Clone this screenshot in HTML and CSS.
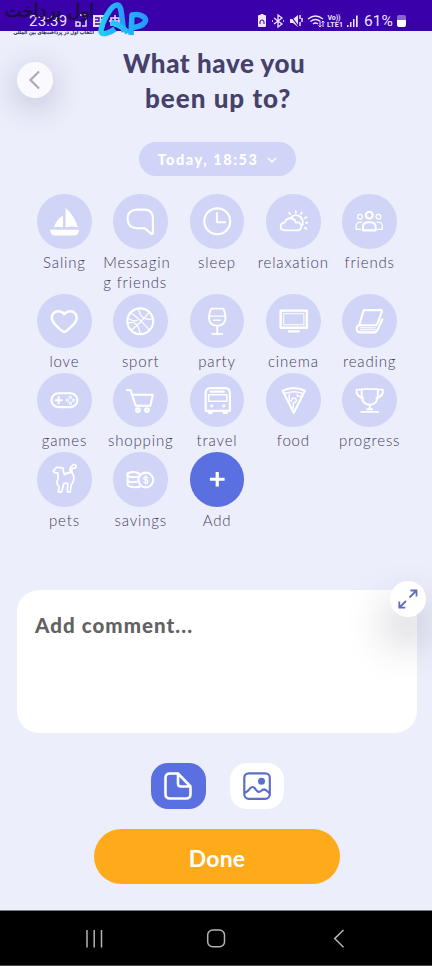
FILE: index.html
```html
<!DOCTYPE html>
<html lang="en">
<head>
<meta charset="utf-8">
<title>What have you been up to?</title>
<link rel="stylesheet" href="styles.css">
</head>
<body>
<header class="status">
  <div class="clock">23:39</div>
  <svg class="notifications" width="48" height="14" viewBox="0 0 48 14"><g fill="none" stroke="#e9dcff" stroke-width="1.5"><path d="M5 1h6v11H7M1 8h4v4H1z"/><path d="M36 4h8v7h-8zM34 7h12M40 1v12"/></g><path fill="#e9dcff" d="M18 1h12v12H18z"/><path d="M20 4h4v3h-4m6-3h2v2m-8 4h7" fill="none" stroke="#3a00aa" stroke-width="1.3"/></svg>
  <svg class="system" width="104" height="16" viewBox="0 0 104 16">
    <g fill="none" stroke="#eee4ff" stroke-width="1.3">
      <path d="M18 5l8 6-4 3V2l4 3-8 6M16 8h1M27 8h1"/>
      <path d="M44 2v4M46 5v4M44 9v4" stroke-width="1.5"/>
      <path d="M52 6q7.500-6 15 0M54.500 8.500q5-4 10 0M57 11q2.500-2 5 0"/>
      <path d="M64 9v5M62.500 12.500l1.500 1.500 1.500-1.500M67 14V8M65.500 9.500l1.500-1.500 1.500 1.500" stroke-width="1"/>
    </g>
    <g fill="#eee4ff"><path d="M3 2h1.500V1h3v1H9q1 0 1 1v10q0 1-1 1H3q-1 0-1-1V3q0-1 1-1z"/><path d="M34 6h3l5-4v12l-5-4h-3z"/><path d="M91 12h1.500v2H91zM94 9h1.500v5H94zM97 6h1.500v8H97zM100 2.500h1.700V14H100z"/></g>
    <path d="M4 9a2 2 0 1 1 4 0M4 9v2M8 9v2" fill="none" stroke="#3a00aa"/>
    <path d="M34 2l9 12" stroke="#3a00aa" stroke-width="1.200"/>
    <text x="71.500" y="6.800" class="tiny" textLength="13">Vo))</text><text x="71" y="14.300" class="tiny" textLength="16">LTE1</text>
  </svg>
  <span class="percent">61%</span>
  <i class="battery"></i>
  <div class="watermark">
    <div class="brand">اول پرداخت</div>
    <div class="slogan">انتخاب اول در پرداخت‌های بین المللی</div>
    <svg class="logo" width="54" height="38" viewBox="0 0 54 38"><defs><linearGradient id="b" x2="1"><stop stop-color="#23cef5"/><stop offset="1" stop-color="#2699ff"/></linearGradient></defs><g fill="none" stroke="url(#b)" stroke-width="5.500" stroke-linejoin="round"><path d="M18 29C13 33 4 36 4 31 5 22 14 5 20 5c5 0 4 9 7 27"/><path d="M14 22c5 2 13 5 17 11M34 35l1-20c8-2 16 3 13 7-3 5-9 5-14 6"/></g></svg>
  </div>
</header>

<main>
  <div class="heading">
    <button class="back" aria-label="Back"><svg width="36" height="36" viewBox="0 0 36 36"><path d="M22 9.500l-8.500 8.500 8.500 8.500" fill="none" stroke="#aaa9c2" stroke-width="2.200"/></svg></button>
    <h1><span class="h-a">What have you</span><span class="h-b">been up to?</span></h1>
  </div>
  <button class="date"><span>Today, 18:53</span><svg width="10" height="8" viewBox="0 0 10 8"><path d="M1 2l4 4 4-4" fill="none" stroke="#fff" stroke-width="1.500"/></svg></button>

  <section class="activities">
    <div class="item"><svg class="dot" viewBox="0 0 54 54"><path d="M13 35.500h28.500q0 5.500-4 5.500H17q-3.500 0-4-5.500zM28.300 13.500q9 8 12.200 19.500-7-1.500-12.200 0zM25.700 21.500V33q-4-1.200-8.700 0 2-8 8.700-11.500z" fill="#fff" stroke="none"/></svg><span class="l-saling">Saling</span></div>
    <div class="item"><svg class="dot" viewBox="0 0 54 54"><path d="M23 15.500h8q8.500 0 8.500 8.500v14.500q0 2-2 .500l-6-5H23q-8.500-1-8.500-9.500 0-8 8.500-9z"/></svg><span class="l-message">Messagin<br>g friends</span></div>
    <div class="item"><svg class="dot" viewBox="0 0 54 54"><circle cx="27" cy="27" r="12.800"/><path d="M26.700 19v9h8"/></svg><span class="l-sleep">sleep</span></div>
    <div class="item"><svg class="dot" viewBox="0 0 54 54"><g stroke-width="1.800"><path d="M18.500 36q-4 0-4-3.700 0-4 4-4 1.500-4.300 5.500-4.300 4.300 0 5.500 4.300 5-1 5.500 3.700 0 4-4 4zM25.500 22.500q3-2.500 6.500-1 5.500 2 4.300 9"/><path d="M23 18.500l1 1.500M29.500 17v1.500M35.500 18.300l-.800 1.500M40 23l-1.500.8M41 28.500h-1.300M40 34.500l-1.500-1"/></g></svg><span class="l-relaxation">relaxation</span></div>
    <div class="item"><svg class="dot" viewBox="0 0 54 54"><circle cx="27" cy="21" r="3.400"/><path d="M20.700 36v-3q0-5 5-5h2.600q5 0 5 5v3z"/><g stroke-width="1.200"><circle cx="17.800" cy="22.500" r="2.400"/><circle cx="36.200" cy="22.500" r="2.400"/><path d="M19.500 28q-5.500-.5-5.500 4v3h4.500M34.500 28q5.500-.5 5.500 4v3h-4.500"/></g></svg><span class="l-friends">friends</span></div>

    <div class="item"><svg class="dot" viewBox="0 0 54 54"><path d="M27 37.500q-2 0-9-7.200c-7-7.300-1.500-13.300 3-13.300q4 0 6 3 2-3 6-3c4.500 0 10 6 3 13.300Q29 37.500 27 37.500z" stroke-width="2.500"/></svg><span class="l-love">love</span></div>
    <div class="item"><svg class="dot" viewBox="0 0 54 54"><circle cx="27" cy="27" r="12.800"/><path d="M17.500 18.500q9 6 18.500 17M14.500 29q10-4 12.500 11M18 36q9-7 18-18M25 14.500q3 13 14.500 10M15 24q6 4 9 2" stroke-width="1.300"/></svg><span class="l-sport">sport</span></div>
    <div class="item"><svg class="dot" viewBox="0 0 54 54"><path d="M21 14.500h12q2.700 6 2 11-1.500 6-8 6t-8-6q-.700-5 2-11zM27 31.500V39M22 39.500h10" stroke-width="1.900"/><path d="M20 22h14M23 26h7" stroke-width="1.300"/></svg><span class="l-party">party</span></div>
    <div class="item"><svg class="dot" viewBox="0 0 54 54"><path d="M14.500 16.500h26v17h-26z" stroke-width="2.400"/><path d="M17.500 19.500h20v11h-20z" stroke-width="1"/><path d="M22.500 37h10"/></svg><span class="l-cinema">cinema</span></div>
    <div class="item"><svg class="dot" viewBox="0 0 54 54"><path d="M22 16h16.500q1.500 0 1 1.500L35 29.500q-.500 1.500-2 1.500H17l4-13.500q.500-1.500 1-1.500zM17 31q-3 1-2.300 4 .500 3 3.300 3h14q2 0 3-2l5-11"/><path d="M18 33.500h15M18 35.500h15" stroke-width="1"/></svg><span class="l-reading">reading</span></div>

    <div class="item"><svg class="dot" viewBox="0 0 54 54"><rect x="14.300" y="20" width="25.700" height="13.800" rx="6.900"/><path d="M18.500 27h6M21.500 24v6"/><g stroke-width="1"><circle cx="33" cy="24" r="1.200"/><circle cx="33" cy="30" r="1.200"/><circle cx="30" cy="27" r="1.200"/><circle cx="36" cy="27" r="1.200"/></g></svg><span class="l-games">games</span></div>
    <div class="item"><svg class="dot" viewBox="0 0 54 54"><path d="M14 17h3.500l5 15.500h14.500l2.500-11H19"/><circle cx="24.700" cy="36.700" r="1.800"/><circle cx="33.700" cy="36.700" r="1.800"/></svg><span class="l-shopping">shopping</span></div>
    <div class="item"><svg class="dot" viewBox="0 0 54 54"><path d="M20 15h15q4.500 0 4.500 5v17.500H15.500V20q0-5 4.500-5zM20.500 18.500h13"/><path d="M18.500 21.500h18v6.500h-18z" stroke-width="1.500"/><path d="M18.500 38v1.500h3V38M33.500 38v1.500h3V38"/><circle cx="21.500" cy="32.500" r=".6"/><circle cx="33.500" cy="32.500" r=".6"/></svg><span class="l-travel">travel</span></div>
    <div class="item"><svg class="dot" viewBox="0 0 54 54"><path d="M16.500 17.500q11-5 22 0L27.500 39.500z"/><path d="M19.500 20q8-3 16 0M23 21v6q3 2 3-2h3q3 3-2 5v5M31 21v2h3" stroke-width="1.500"/></svg><span class="l-food">food</span></div>
    <div class="item"><svg class="dot" viewBox="0 0 54 54"><path d="M19.500 16h16v6q0 9-8 9.500-8-.500-8-9.500zM19.500 16.500h-5q-1 6.500 6.500 8.500M35.500 16.500h5q1 6.500-6.500 8.500M27.500 31.500V36M19 38.500h17M25 36h5" stroke-width="1.900"/></svg><span class="l-progress">progress</span></div>

    <div class="item"><svg class="dot" viewBox="0 0 54 54"><path d="M19.500 15l-3.500 4q1.500 2.500 4.500 1.500l.500 5.500q-2 3-1 6l2 2.500-1 5h3.500l2-8q2-1.500 4 0l-.500 8H33l1-7q3.500-4 2-10-3-4-.500-6.500 4 .5 3-2.500-.800-2-3-.500-4.500 3.500-2 7.500-3.500-.5-6 2-2-3-1.500-6.500l-3-.500z" stroke-width="1.700"/></svg><span class="l-pets">pets</span></div>
    <div class="item"><svg class="dot" viewBox="0 0 54 54"><circle cx="32.500" cy="27.700" r="7.300"/><path d="M26 21.500q-5-3-11-.500-2 1.500 0 3 4 1.500 9 .500M14.500 24v5q4 1.500 9 .500M14.500 29v4q4 3 12 1.500M14.500 21v4" stroke-width="2"/><path d="M34.500 25.500q-4-1.500-4 .500t2 1.500 2 2-4 .500M32.500 23.500v8.500" stroke-width="1.200"/></svg><span class="l-savings">savings</span></div>
    <div class="item"><svg class="dot add" viewBox="0 0 54 54"><path d="M19.700 27h14.600M27 19.700v14.600"/></svg><span class="l-add">Add</span></div>
  </section>

  <section class="comment">
    <span>Add comment...</span>
    <button class="expand" aria-label="Expand"><svg width="36" height="36" viewBox="0 0 36 36"><path d="M19.500 16.500l6.800-6.800M20.500 9.500H26.500v6M16 20l-6.500 6.500M9.300 20.500V26.700h6" fill="none" stroke="#5f6fbe" stroke-width="1.800"/></svg></button>
  </section>

  <div class="attach">
    <button class="chip chosen" aria-label="Note"><svg width="54" height="46" viewBox="0 0 54 46"><path d="M27 10.500h-8q-4.500 0-4.500 4.500v16q0 4.500 4.500 4.500h16q4.500 0 4.500-4.500v-7.500L27 10.500v10q0 3 3 3h9.500" fill="none" stroke="#fff" stroke-width="2.600" stroke-linejoin="round"/></svg></button>
    <button class="chip" aria-label="Picture"><svg width="54" height="46" viewBox="0 0 54 46"><g fill="none" stroke="#5b6fc8" stroke-width="2.200"><rect x="14.300" y="10.300" width="25.500" height="25.500" rx="4.500"/><path d="M14.500 30q4-2 5.500-4.500 2.500-3 5 0 3 5 6 2.500 3-3 6 0l3 2.500"/></g><circle cx="31.500" cy="18.300" r="3.500" fill="#5b6fc8"/></svg></button>
  </div>
  <button class="done">Done</button>
</main>

<nav>
  <svg width="432" height="54" viewBox="0 0 432 54"><g fill="none" stroke="#b4b4b4" stroke-width="1.500"><path d="M87 19v17.500M94.200 19v17.500M101.500 19v17.500"/><rect x="207.700" y="19" width="16.800" height="16.800" rx="5"/><path d="M343.500 19l-8.800 8.600 8.800 8.600"/></g></svg>
</nav>
</body>
</html>
```
FILE: styles.css
```css
* { box-sizing: border-box; }
body { margin: 0; width: 432px; height: 966px; overflow: hidden; background: #eceefb; font-family: Lato, sans-serif; color: #45415f; }
button { border: 0; padding: 0; font-family: inherit; }
svg { display: block; }

.status { position: relative; height: 31px; background: #3a00aa; display: flex; align-items: flex-start; padding: 13px 26px 0 29px; color: #eee4ff; font-family: Roboto, sans-serif; }
.clock { width: 46px; font-size: 15px; line-height: 16px; letter-spacing: .2px; }
.notifications { margin-top: 1px; }
.system { margin-left: 133px; }
.tiny { font: bold 7px Roboto, sans-serif; fill: #eee4ff; }
.percent { margin-left: 4px; width: 33px; font-size: 15.500px; line-height: 16px; white-space: nowrap; }
.battery { flex: none; width: 9px; height: 12px; margin-top: 2px; border-radius: 2px; background: linear-gradient(#8b62d2 45%, #fff 45%); }
.watermark { position: absolute; left: 0; top: 0; width: 155px; height: 40px; direction: rtl; color: #17103b; font-family: "DejaVu Sans", sans-serif; white-space: nowrap; }
.brand { position: absolute; right: 61px; top: -2px; font-size: 18px; line-height: 26px; -webkit-text-stroke: .5px #17103b; }
.slogan { position: absolute; right: 61px; top: 28px; font-size: 5.200px; line-height: 9px; -webkit-text-stroke: .2px #17103b; }
.logo { position: absolute; left: 97px; top: 0; }

main { height: 879px; display: flex; flex-direction: column; }
.heading { display: flex; height: 111px; padding: 14px 0 0 17px; }
.back { width: 36px; height: 36px; margin-top: 17px; border-radius: 50%; background: #fafafe; box-shadow: 0 8px 28px 5px rgba(65, 65, 110, .18); }
h1 { margin: 1px 0 0 70px; font-size: 26px; font-weight: 900; line-height: 35px; white-space: nowrap; color: #45416b; }
h1 span { display: block; }
.h-a { letter-spacing: .58px; }
.h-b { margin-left: 22px; letter-spacing: 1px; }
.date { width: 157px; height: 34px; margin-left: 138.500px; border-radius: 17px; background: #d0d4f7; color: #fff; display: flex; align-items: center; padding: 1px 0 0 19px; font-size: 14.500px; font-weight: 900; letter-spacing: 1.55px; }
.date span { width: 109px; text-align: left; white-space: nowrap; }

.activities { width: 381.500px; margin: 18px 0 0 26.300px; display: grid; grid-template-columns: repeat(5, 76.300px); }
.item { display: flex; flex-direction: column; align-items: center; height: 79.300px; font-size: 15px; font-weight: 300; line-height: 20.500px; letter-spacing: .85px; white-space: nowrap; }
.item:nth-child(2) { height: 99.600px; }
.item span { margin-top: 3px; }
.dot { flex: none; width: 54.500px; height: 54.500px; border-radius: 50%; background: #d0d4f7; fill: none; stroke: #fff; stroke-width: 2.100; stroke-linejoin: round; stroke-linecap: round; }
.add { background: #5a6fe0; stroke-linecap: butt; stroke-width: 3.200; }
.l-message { width: 75px; }

.comment { position: relative; width: 400px; height: 143px; margin: 59px 0 0 17px; border-radius: 22px; background: #fff; padding: 23px 18px; font-size: 20.500px; line-height: 24px; font-weight: 900; letter-spacing: 1.05px; color: #626262; }
.expand { position: absolute; right: -9px; top: -9px; width: 36px; height: 36px; border-radius: 50%; background: #fff; box-shadow: 0 24px 42px 3px rgba(50, 50, 75, .26); }
.attach { display: flex; gap: 24px; margin: 29.500px 0 0 151px; }
.chip { width: 54.500px; height: 46px; border-radius: 17px; background: #fff; }
.chosen { background: #5a6fe0; }
.done { width: 246px; height: 55px; margin: 20px 0 0 94px; padding-top: 3px; border-radius: 28px; background: #ffaa1a; color: #fff; font-size: 23px; font-weight: 700; letter-spacing: .2px; }
nav { position: relative; height: 56px; background: #000; border-top: 1px solid #777b83; border-bottom: 1px solid #484848; }
```
